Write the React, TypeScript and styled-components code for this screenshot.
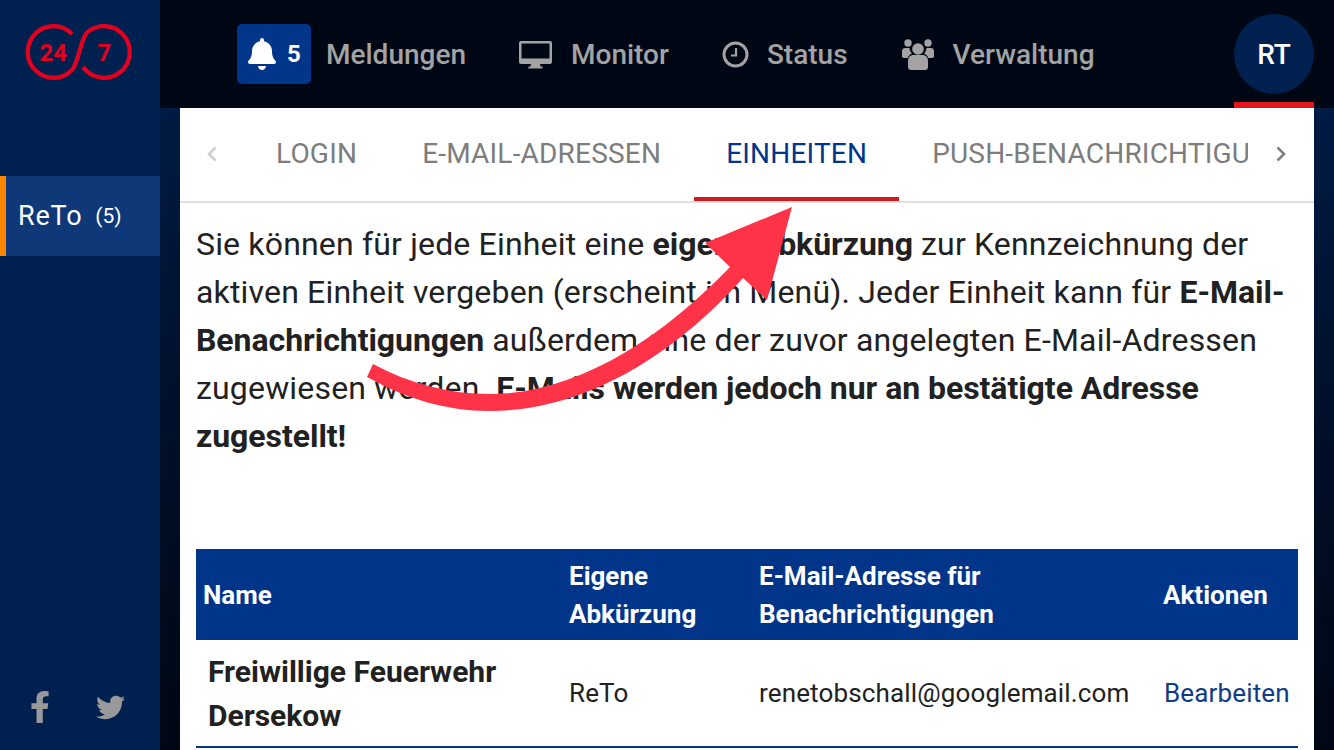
import React from "react";
import styled, { createGlobalStyle } from "styled-components";
import { FaBell, FaFacebookF, FaTwitter } from "react-icons/fa";

const Global = createGlobalStyle`
  html, body { margin: 0; padding: 0; height: 750px; overflow: hidden; background: #000714; }
  body { font-family: Roboto, "Liberation Sans", sans-serif; }
  * { box-sizing: border-box; }
`;

const Page = styled.div`
  position: relative;
  display: flex;
  width: 1334px;
  height: 750px;
  overflow: hidden;
`;

const Sidebar = styled.aside`
  width: 160px;
  flex: none;
  display: flex;
  flex-direction: column;
  background: #002050;
`;

const LogoBox = styled.div`
  height: 176px;
  padding: 22px 0 0 24px;
`;

const LogoText = styled.text`
  font-family: Roboto, sans-serif;
  font-weight: 700;
  font-size: 24px;
  fill: #e3001f;
`;

const SideItem = styled.div`
  height: 80px;
  display: flex;
  align-items: center;
  gap: 13px;
  padding-left: 12px;
  border-left: 6px solid #ff8400;
  background: #0f3878;
  color: #fff;
  font-size: 27px;
  letter-spacing: 0.8px;
`;

const SideCount = styled.span`
  font-size: 21px;
  letter-spacing: 0;
`;

const Social = styled.div`
  margin-top: auto;
  height: 64px;
  display: flex;
  align-items: center;
  align-self: stretch;
  gap: 40px;
  padding: 0 0 22px 24px;
  color: #999;
  font-size: 32px;
`;

const Main = styled.main`
  flex: 1;
  min-width: 0;
  display: flex;
  flex-direction: column;
  background: linear-gradient(180deg, #001f4d 0%, #00102a 55%, #000714 100%);
`;

const Topbar = styled.header`
  height: 108px;
  flex: none;
  display: flex;
  align-items: center;
  padding-left: 77px;
  background: #000714;
`;

const Badge = styled.div`
  width: 74px;
  height: 60px;
  margin-top: -1px;
  display: flex;
  align-items: center;
  padding-left: 9px;
  gap: 9px;
  border-radius: 5px;
  background: #00358a;
  color: #fff;
  font-size: 24px;
  font-weight: 700;
`;

const NavItem = styled.div<{ $gap: number; $left: number }>`
  display: flex;
  align-items: center;
  gap: ${(p) => p.$gap}px;
  margin-left: ${(p) => p.$left}px;
  color: #a3a3a3;
  font-size: 28px;
  font-weight: 500;
`;

const Profile = styled.div`
  margin-left: auto;
  margin-right: 20px;
  width: 80px;
  height: 108px;
  display: flex;
  flex-direction: column;
  border-bottom: 6px solid #e3141b;
  padding-top: 14px;
`;

const Avatar = styled.div`
  width: 80px;
  height: 80px;
  border-radius: 50%;
  background: #002050;
  color: #fff;
  font-size: 28px;
  font-weight: 500;
  display: flex;
  align-items: center;
  justify-content: center;
`;

const Card = styled.section`
  flex: 1;
  margin: 0 20px;
  background: #fff;
  overflow: hidden;
`;

const TabBar = styled.nav`
  height: 95px;
  display: flex;
  border-bottom: 2px solid #e0e0e0;
`;

const Scroller = styled.div<{ $w: number; $muted?: boolean }>`
  width: ${(p) => p.$w}px;
  flex: none;
  display: flex;
  align-items: center;
  justify-content: center;
  color: ${(p) => (p.$muted ? "#cfcfcf" : "#808080")};
  padding-bottom: 1px;
`;

const TabViewport = styled.div`
  flex: 1;
  min-width: 0;
  display: flex;
  gap: 1px;
  overflow: hidden;
`;

const Tab = styled.div<{ $active?: boolean }>`
  flex: none;
  height: 93px;
  padding: 1px 32px 0;
  display: flex;
  align-items: center;
  font-size: 28px;
  letter-spacing: 0.2px;
  color: ${(p) => (p.$active ? "#00358a" : "#7d7d7d")};
  border-bottom: 4px solid ${(p) => (p.$active ? "#cf1a22" : "transparent")};
`;

const Body = styled.div`
  padding: 17px 16px 0;
`;

const Intro = styled.p`
  margin: 0 0 89px;
  font-size: 32px;
  line-height: 48px;
  letter-spacing: 0.17px;
  color: #212121;
  strong { font-weight: 700; letter-spacing: -0.05px; }
`;

const Table = styled.table`
  width: 1102px;
  table-layout: fixed;
  border-collapse: collapse;
`;

const Th = styled.th<{ $w: number }>`
  width: ${(p) => p.$w}px;
  height: 91px;
  padding: 0 7px;
  background: #00358a;
  color: #fff;
  font-size: 26px;
  font-weight: 700;
  line-height: 38px;
  text-align: left;
`;

const Row = styled.tr`
  border-bottom: 2px solid #00358a;
`;

const NameCell = styled.td`
  height: 107px;
  padding: 2px 12px 0;
  font-size: 30px;
  font-weight: 700;
  line-height: 44px;
  color: #212121;
`;

const Cell = styled.td`
  padding: 0 7px;
  font-size: 26px;
  letter-spacing: 0.15px;
  color: #212121;
  white-space: nowrap;
`;

const ActionLink = styled.a`
  margin-left: 1px;
  color: #0f3c85;
`;

const ArrowOverlay = styled.svg`
  position: absolute;
  left: 0;
  top: 0;
  pointer-events: none;
`;

const Chevron = ({ dir }: { dir: "l" | "r" }) => (
  <svg width="12" height="20" viewBox="0 0 12 20" fill="none" stroke="currentColor" strokeWidth="2.6">
    <path d={dir === "l" ? "M9.5 3.5 3 10l6.5 6.5" : "M2.5 3.5 9 10l-6.500 6.500"} />
  </svg>
);

const Clock = () => (
  <svg width="27" height="27" viewBox="0 0 27 27" fill="none" stroke="currentColor">
    <circle cx="13.500" cy="13.500" r="11.500" strokeWidth="3" />
    <path d="M14 7v7.500H9" strokeWidth="2.200" />
  </svg>
);

const Monitor = () => (
  <svg width="33" height="29" viewBox="0 0 33 29" fill="currentColor">
    <path
      fillRule="evenodd"
      d="M2 1h29a2 2 0 0 1 2 2v19a2 2 0 0 1-2 2H21l.500 2.500h2V28.500H9.500V26.500h2L12 24H2a2 2 0 0 1-2-2V3a2 2 0 0 1 2-2ZM2.500 3.500V18.500H30.500V3.500Z"
    />
  </svg>
);

const Users = () => (
  <svg width="32" height="31" viewBox="0 0 32 31" fill="currentColor">
    <circle cx="6" cy="4" r="3.700" />
    <circle cx="26" cy="4" r="3.700" />
    <circle cx="16" cy="10" r="5.800" />
    <path d="M3 9h4.500c.200 2.500 1 4.300 2.500 5.500-2.300 1-3.800 2.600-4.300 4.500H2c-1.300 0-2-.700-2-2v-4.500C0 10.500 1 9 3 9Z" />
    <path d="M29 9h-4.500c-.200 2.500-1 4.300-2.500 5.500 2.300 1 3.800 2.600 4.300 4.500H30c1.300 0 2-.700 2-2v-4.500C32 10.500 31 9 29 9Z" />
    <path d="M11.500 16h9c3.500 0 5.500 2.500 5.500 6v6c0 1.800-1.200 3-3 3H9c-1.800 0-3-1.200-3-3v-6c0-3.500 2-6 5.500-6Z" />
  </svg>
);

export default function App() {
  return (
    <Page>
      <Global />
      <Sidebar>
        <LogoBox>
          <svg width="110" height="60" viewBox="0 0 110 60" fill="none">
            <path
              d="M48 12A25.800 25.800 0 1 0 48 48C54 42 57 16 63 10.500A25.800 25.800 0 1 1 59 45"
              stroke="#e3001f"
              strokeWidth="4.300"
            />
            <LogoText x="15.500" y="38.500">24</LogoText>
            <LogoText x="73.500" y="38.500">7</LogoText>
          </svg>
        </LogoBox>
        <SideItem>
          ReTo <SideCount>(5)</SideCount>
        </SideItem>
        <Social>
          <FaFacebookF />
          <FaTwitter size={29} />
        </Social>
      </Sidebar>
      <Main>
        <Topbar>
          <Badge>
            <FaBell size={32} />5
          </Badge>
          <NavItem $gap={0} $left={15}>Meldungen</NavItem>
          <NavItem $gap={19} $left={53}>
            <Monitor />
            Monitor
          </NavItem>
          <NavItem $gap={18} $left={53}>
            <Clock />
            Status
          </NavItem>
          <NavItem $gap={19} $left={54}>
            <Users />
            Verwaltung
          </NavItem>
          <Profile>
            <Avatar>RT</Avatar>
          </Profile>
        </Topbar>
        <Card>
          <TabBar>
            <Scroller $w={64} $muted>
              <Chevron dir="l" />
            </Scroller>
            <TabViewport>
              <Tab>LOGIN</Tab>
              <Tab>E-MAIL-ADRESSEN</Tab>
              <Tab $active>EINHEITEN</Tab>
              <Tab>PUSH-BENACHRICHTIGUNGEN</Tab>
            </TabViewport>
            <Scroller $w={66}>
              <Chevron dir="r" />
            </Scroller>
          </TabBar>
          <Body>
            <Intro>
              Sie können für jede Einheit eine <strong>eigene Abkürzung</strong> zur Kennzeichnung der aktiven
              Einheit vergeben (erscheint im Menü). Jeder Einheit kann für <strong>E-Mail-Benachrichtigungen</strong>{" "}
              außerdem eine der zuvor angelegten E-Mail-Adressen zugewiesen werden.{" "}
              <strong>E-Mails werden jedoch nur an bestätigte Adresse zugestellt!</strong>
            </Intro>
            <Table>
              <thead>
                <tr>
                  <Th $w={366}>Name</Th>
                  <Th $w={190}>Eigene Abkürzung</Th>
                  <Th $w={404}>E-Mail-Adresse für Benachrichtigungen</Th>
                  <Th $w={142}>Aktionen</Th>
                </tr>
              </thead>
              <tbody>
                <Row>
                  <NameCell>Freiwillige Feuerwehr Dersekow</NameCell>
                  <Cell>ReTo</Cell>
                  <Cell>renetobschall@googlemail.com</Cell>
                  <Cell>
                    <ActionLink>Bearbeiten</ActionLink>
                  </Cell>
                </Row>
              </tbody>
            </Table>
          </Body>
        </Card>
      </Main>
      <ArrowOverlay width="1334" height="750" viewBox="0 0 1334 750">
        <path
          fill="#ff3347"
          d="M373 364C410 384 450 394 490 394 575 394 660 340 730 267L705 243 792 207 767 300 743 278C670 360 580 411 490 411 445 411 405 398 367 377Z"
        />
      </ArrowOverlay>
    </Page>
  );
}
